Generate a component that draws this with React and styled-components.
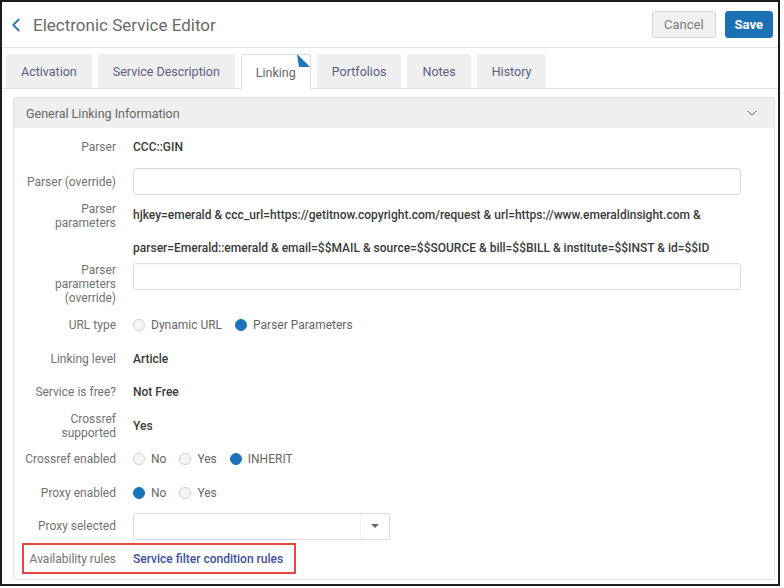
import React from "react";
import styled, { createGlobalStyle } from "styled-components";
import { ChevronLeft, ChevronDown } from "lucide-react";

const GlobalStyle = createGlobalStyle`
  body {
    margin: 0;
    background: #fff;
    font-family: Roboto, "Liberation Sans", Arial, sans-serif;
  }
`;

const Frame = styled.div`
  width: 780px;
  height: 586px;
  border: 2px solid #1c1c1c;
  box-sizing: border-box;
  display: flex;
  flex-direction: column;
  background: #fff;
`;

const Header = styled.div`
  height: 46px;
  display: flex;
  align-items: center;
  border-bottom: 1px solid #e6e6e6;
  padding: 0 5px 0 3px;
  box-sizing: border-box;
`;

const BackButton = styled.button`
  border: none;
  background: none;
  padding: 0;
  color: #2d74b8;
  display: flex;
  align-items: center;
  cursor: pointer;
`;

const Title = styled.h1`
  margin: 0 0 0 6px;
  font-size: 17px;
  font-weight: 400;
  color: #6a6a6a;
  flex: 1;
`;

const Button = styled.button`
  height: 27px;
  padding: 0 ${(p) => (p.$primary ? "9px" : "11px")};
  margin-left: 9px;
  border-radius: 3px;
  font-family: inherit;
  font-size: 13px;
  border: 1px solid ${(p) => (p.$primary ? "#1b6fb3" : "#d6d6d6")};
  background: ${(p) => (p.$primary ? "#1b70b6" : "#f1f1f1")};
  color: ${(p) => (p.$primary ? "#fff" : "#7a7a7a")};
  font-weight: ${(p) => (p.$primary ? 700 : 400)};
`;

const TabStrip = styled.div`
  display: flex;
  gap: 6px;
  padding: 6px 0 0 4px;
  border-bottom: 1px solid #e3e3e3;
  height: 41px;
  box-sizing: border-box;
`;

const Tab = styled.div`
  position: relative;
  padding: 0 14px;
  display: flex;
  align-items: center;
  font-size: 12.5px;
  border-radius: 3px 3px 0 0;
  background: ${(p) => (p.$active ? "#fff" : "#efefef")};
  color: ${(p) => (p.$active ? "#666" : "#5a6085")};
  border: 1px solid ${(p) => (p.$active ? "#dcdcdc" : "#efefef")};
  border-bottom: none;
  margin-bottom: ${(p) => (p.$active ? "-1px" : "0")};
`;

const Corner = styled.svg`
  position: absolute;
  top: -1px;
  right: 0;
`;

const Panel = styled.section`
  margin: 8px 3px 0 11px;
  border: 1px solid #e2e2e2;
  border-radius: 2px;
`;

const PanelHeader = styled.div`
  height: 30px;
  background: #efefef;
  display: flex;
  align-items: center;
  justify-content: space-between;
  padding: 0 14px 0 12px;
  font-size: 12.5px;
  color: #666;
`;

const PanelBody = styled.div`
  padding: 2px 0 5px 0;
`;

const Row = styled.div`
  display: grid;
  grid-template-columns: 102px 1fr;
  column-gap: 17px;
  align-items: ${(p) => (p.$top ? "start" : "center")};
  height: ${(p) => p.$h}px;
`;

const Highlight = styled(Row)`
  margin-left: 8px;
  width: 274px;
  border: 2px solid #e8453f;
  box-sizing: border-box;
  grid-template-columns: 92px auto;
`;

const Label = styled.div`
  text-align: right;
  font-size: 12px;
  line-height: 14px;
  color: #727272;
  padding-top: ${(p) => p.$pt || 0}px;
`;

const Value = styled.div`
  font-size: 12px;
  font-weight: 500;
  color: #3a3a3a;
  line-height: ${(p) => p.$lh || 14}px;
  white-space: nowrap;
`;

const TextInput = styled.input`
  width: 608px;
  height: 27px;
  box-sizing: border-box;
  border: 1px solid #dcdcdc;
  border-radius: 3px;
  box-shadow: inset 0 1px 1px rgba(0, 0, 0, 0.04);
  font-family: inherit;
`;

const RadioGroup = styled.div`
  display: flex;
  align-items: center;
  gap: 13px;
`;

const Option = styled.label`
  display: flex;
  align-items: center;
  gap: 6px;
  font-size: 12px;
  color: #666;
`;

const RadioDot = styled.span`
  width: 12px;
  height: 12px;
  border-radius: 50%;
  box-sizing: border-box;
  background: ${(p) => (p.$checked ? "#1b73b9" : "#f6f6f6")};
  border: 1px solid ${(p) => (p.$checked ? "#1b73b9" : "#cfcfcf")};
`;

const Select = styled.div`
  width: 257px;
  height: 27px;
  box-sizing: border-box;
  border: 1px solid #dcdcdc;
  border-radius: 3px;
  display: flex;
  justify-content: flex-end;
`;

const SelectArrow = styled.div`
  width: 28px;
  border-left: 1px solid #f0f0f0;
  display: flex;
  align-items: center;
  justify-content: center;

  &::after {
    content: "";
    border-left: 4px solid transparent;
    border-right: 4px solid transparent;
    border-top: 4px solid #666;
  }
`;

const Link = styled.a`
  font-size: 12px;
  font-weight: 500;
  color: #3d4f9f;
  text-decoration: none;
  white-space: nowrap;
`;

const tabs = [
  "Activation",
  "Service Description",
  "Linking",
  "Portfolios",
  "Notes",
  "History",
];

function Radios({ options, selected }) {
  return (
    <RadioGroup>
      {options.map((opt) => (
        <Option key={opt}>
          <RadioDot $checked={opt === selected} />
          {opt}
        </Option>
      ))}
    </RadioGroup>
  );
}

export default function App() {
  return (
    <>
      <GlobalStyle />
      <Frame>
        <Header>
          <BackButton>
            <ChevronLeft size={22} strokeWidth={2} />
          </BackButton>
          <Title>Electronic Service Editor</Title>
          <Button>Cancel</Button>
          <Button $primary>Save</Button>
        </Header>

        <TabStrip>
          {tabs.map((t) => (
            <Tab key={t} $active={t === "Linking"}>
              {t}
              {t === "Linking" && (
                <Corner width="13" height="13" viewBox="0 0 13 13">
                  <polygon points="0,0 13,13 2,13" fill="#1d72b8" />
                </Corner>
              )}
            </Tab>
          ))}
        </TabStrip>

        <Panel>
          <PanelHeader>
            General Linking Information
            <ChevronDown size={16} strokeWidth={1.5} color="#777" />
          </PanelHeader>
          <PanelBody>
            <Row $h={34}>
              <Label>Parser</Label>
              <Value>CCC::GIN</Value>
            </Row>
            <Row $h={35}>
              <Label>Parser (override)</Label>
              <TextInput type="text" />
            </Row>
            <Row $h={64} $top>
              <Label $pt={3}>
                Parser
                <br />
                parameters
              </Label>
              <Value $lh={33}>
                hjkey=emerald &amp; ccc_url=https://getitnow.copyright.com/request &amp; url=https://www.emeraldinsight.com &amp;
                <br />
                parser=Emerald::emerald &amp; email=$$MAIL &amp; source=$$SOURCE &amp; bill=$$BILL &amp; institute=$$INST &amp; id=$$ID
              </Value>
            </Row>
            <Row $h={45} $top>
              <Label>
                Parser
                <br />
                parameters
                <br />
                (override)
              </Label>
              <TextInput type="text" />
            </Row>
            <Row $h={34}>
              <Label>URL type</Label>
              <Radios
                options={["Dynamic URL", "Parser Parameters"]}
                selected="Parser Parameters"
              />
            </Row>
            <Row $h={33}>
              <Label>Linking level</Label>
              <Value>Article</Value>
            </Row>
            <Row $h={34}>
              <Label>Service is free?</Label>
              <Value>Not Free</Value>
            </Row>
            <Row $h={33}>
              <Label>
                Crossref
                <br />
                supported
              </Label>
              <Value>Yes</Value>
            </Row>
            <Row $h={34}>
              <Label>Crossref enabled</Label>
              <Radios options={["No", "Yes", "INHERIT"]} selected="INHERIT" />
            </Row>
            <Row $h={33}>
              <Label>Proxy enabled</Label>
              <Radios options={["No", "Yes"]} selected="No" />
            </Row>
            <Row $h={34}>
              <Label>Proxy selected</Label>
              <Select>
                <SelectArrow />
              </Select>
            </Row>
            <Highlight $h={31}>
              <Label>Availability rules</Label>
              <Link href="#">Service filter condition rules</Link>
            </Highlight>
          </PanelBody>
        </Panel>
      </Frame>
    </>
  );
}
